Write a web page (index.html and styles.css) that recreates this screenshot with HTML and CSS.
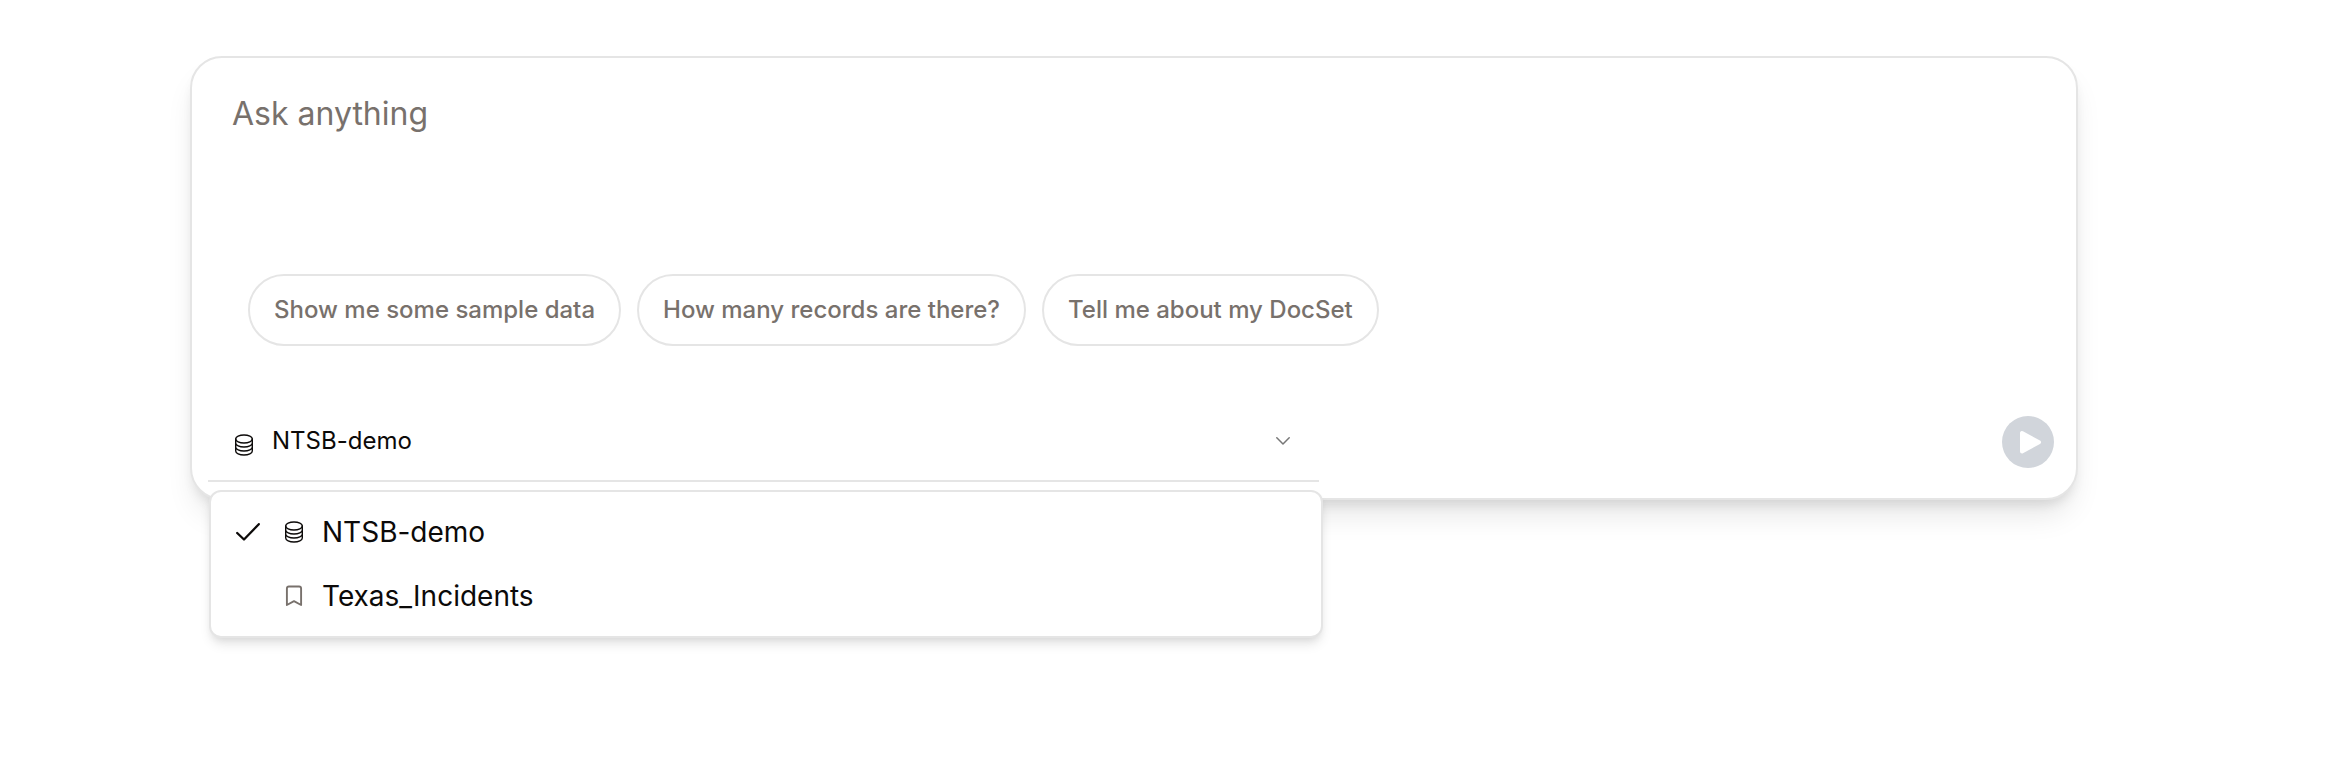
FILE: index.html
```html
<!DOCTYPE html>
<html lang="en">
<head>
<meta charset="utf-8">
<title>Ask anything</title>
<link rel="stylesheet" href="styles.css">
</head>
<body>
<svg class="symbols" aria-hidden="true">
  <symbol id="database" viewBox="0 0 18 22">
    <ellipse cx="9" cy="5" rx="8.3" ry="4"/>
    <path d="M.7 5v12c0 2.200 3.700 4 8.300 4s8.300-1.800 8.300-4V5M.7 9c0 2.200 3.700 4 8.300 4s8.300-1.800 8.300-4M.7 13c0 2.200 3.700 4 8.300 4s8.300-1.800 8.300-4"/>
  </symbol>
</svg>
<main class="composer">
  <div class="prompt">Ask anything</div>
  <div class="suggestions">
    <button class="chip">Show me some sample data</button>
    <button class="chip">How many records are there?</button>
    <button class="chip">Tell me about my DocSet</button>
  </div>
  <div class="footer">
    <div class="select">
      <svg class="icon-db select-db"><use href="#database"/></svg>
      <span class="select-label">NTSB-demo</span>
      <svg class="chevron" viewBox="0 0 14 8"><path d="M.8.8 7 7 13.200.8"/></svg>
      <div class="menu">
        <div class="option">
          <svg class="check" viewBox="0 0 24 18"><path d="M1.200 10 8 16.500 22.800 1.200"/></svg>
          <svg class="icon-db"><use href="#database"/></svg>
          <span>NTSB-demo</span>
        </div>
        <div class="option">
          <span class="check"></span>
          <svg class="bookmark" viewBox="0 0 18 22"><path d="M1.900 20V3.500Q1.900 1.500 3.900 1.500H14.100Q16.100 1.500 16.100 3.500V20L9 16.200Z"/></svg>
          <span>Texas_Incidents</span>
        </div>
      </div>
    </div>
    <button class="send" aria-label="Send">
      <svg viewBox="0 0 52 52"><path d="M20 17v18.500l17-9.200Z"/></svg>
    </button>
  </div>
</main>
</body>
</html>
```

FILE: styles.css
```css
* { box-sizing: border-box; }

body {
  min-height: 762px;
  margin: 0;
  padding: 56px 258px 0 190px;
  background: #fff;
  color: #0c0a09;
  font-family: Inter, sans-serif;
}

svg {
  display: block;
  flex: none;
  fill: none;
  stroke: currentColor;
  stroke-linecap: round;
  stroke-linejoin: round;
}

button { font-family: inherit; }

.symbols { position: absolute; width: 0; height: 0; }

.composer {
  display: flex;
  flex-direction: column;
  height: 444px;
  padding: 32px 22px 16px 16px;
  background: #fff;
  border: 2px solid #e5e5e5;
  border-radius: 32px;
  box-shadow: 0 20px 30px -6px rgba(0, 0, 0, .1), 0 8px 12px -4px rgba(0, 0, 0, .1);
}

.prompt {
  padding-left: 24px;
  font-size: 32px;
  line-height: 48px;
  color: #78716c;
}

.suggestions {
  display: flex;
  gap: 16px;
  margin-top: 136px;
  padding-left: 40px;
}

.chip {
  height: 72px;
  padding: 0 24px 2px;
  background: #fff;
  border: 2px solid #e5e5e5;
  border-radius: 36px;
  color: #78716c;
  font-size: 24px;
  font-weight: 500;
  white-space: nowrap;
}

.footer {
  display: flex;
  align-items: flex-end;
  justify-content: space-between;
  margin-top: auto;
}

.select {
  position: relative;
  display: flex;
  align-items: center;
  width: 1111px;
  height: 84px;
  padding: 3px 29px 0 27px;
  border-bottom: 2px solid #e5e5e5;
}

.select-label {
  flex: 1;
  margin-left: 19px;
  font-size: 24px;
  line-height: 36px;
}

.icon-db { width: 18px; height: 22px; stroke-width: 1.4; }

.select-db { margin-top: 8px; }

.chevron { width: 14px; height: 8px; color: #777; stroke-width: 1.5; }

.menu {
  position: absolute;
  top: 92px;
  left: 1px;
  width: 1114px;
  padding: 8px 25px;
  background: #fff;
  border: 2px solid #e5e5e5;
  border-radius: 12px;
  box-shadow: 0 8px 12px -2px rgba(0, 0, 0, .1), 0 4px 8px -4px rgba(0, 0, 0, .1);
}

.option {
  display: flex;
  align-items: center;
  height: 64px;
  font-size: 28px;
}

.check { width: 24px; height: 18px; margin-right: 25px; stroke-width: 2.3; }

.option span:last-child { margin-left: 19px; }

.bookmark { width: 18px; height: 22px; color: #78716c; stroke-width: 1.9; }

.send {
  width: 52px;
  height: 52px;
  margin-bottom: 14px;
  padding: 0;
  border: 0;
  border-radius: 50%;
  background: #d1d5db;
  color: #fff;
}

.send svg { fill: currentColor; stroke-width: 4; }
```
